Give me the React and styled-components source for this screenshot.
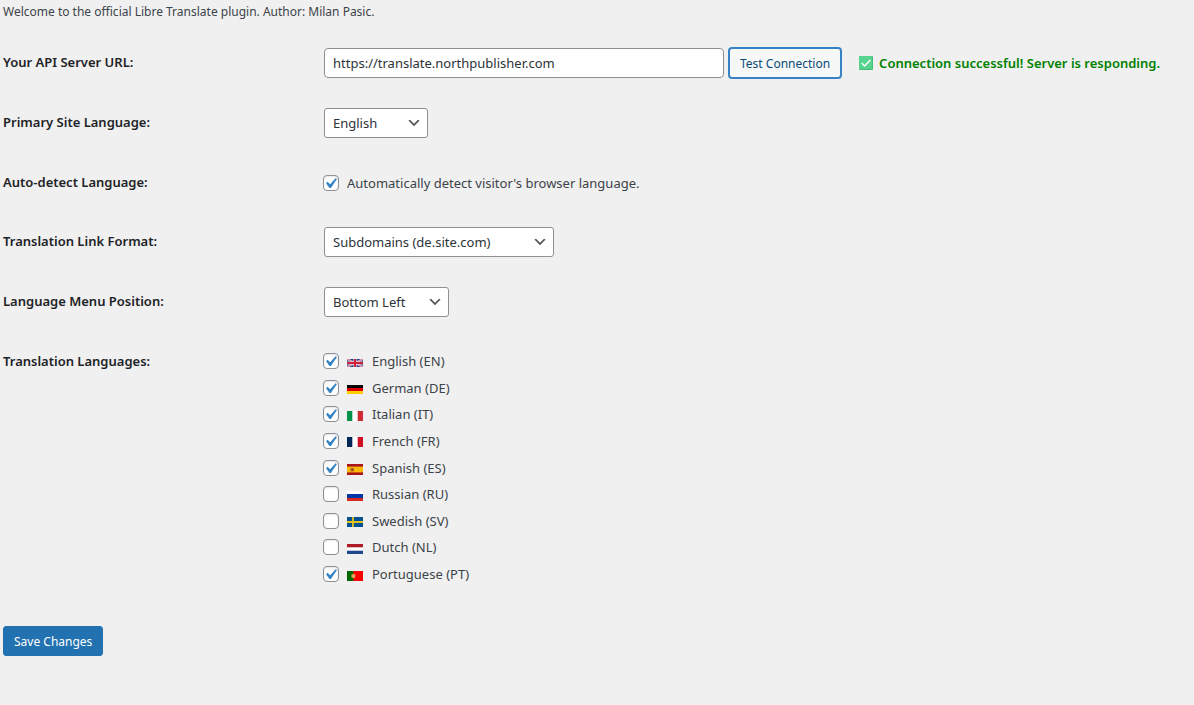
import { useState } from "react";
import styled, { createGlobalStyle } from "styled-components";

const LANGUAGES = [
  { code: "en", name: "English", active: true },
  { code: "de", name: "German", active: true },
  { code: "it", name: "Italian", active: true },
  { code: "fr", name: "French", active: true },
  { code: "es", name: "Spanish", active: true },
  { code: "ru", name: "Russian", active: false },
  { code: "sv", name: "Swedish", active: false },
  { code: "nl", name: "Dutch", active: false },
  { code: "pt", name: "Portuguese", active: true },
];

function App() {
  const [url, setUrl] = useState("https://translate.northpublisher.com");
  const [autoDetect, setAutoDetect] = useState(true);
  const [active, setActive] = useState(
    LANGUAGES.filter((l) => l.active).map((l) => l.code)
  );

  const toggle = (code) =>
    setActive((prev) =>
      prev.includes(code) ? prev.filter((c) => c !== code) : [...prev, code]
    );

  return (
    <>
      <GlobalStyle />
      <Page onSubmit={(e) => e.preventDefault()}>
        <Intro>
          Welcome to the official Libre Translate plugin. Author: Milan Pasic.
        </Intro>

        <Row>
          <RowLabel htmlFor="api-url">Your API Server URL:</RowLabel>
          <Controls>
            <TextInput
              id="api-url"
              type="text"
              value={url}
              onChange={(e) => setUrl(e.target.value)}
            />
            <TestButton type="button">Test Connection</TestButton>
            <Status role="status">
              <SuccessIcon />
              Connection successful! Server is responding.
            </Status>
          </Controls>
        </Row>

        <Row>
          <RowLabel htmlFor="site-lang">Primary Site Language:</RowLabel>
          <Controls>
            <SelectField id="site-lang" $width={104} options={["English", "German", "Italian"]} />
          </Controls>
        </Row>

        <Row $compact>
          <RowLabel htmlFor="auto-detect">Auto-detect Language:</RowLabel>
          <CheckLabel>
            <Checkbox
              id="auto-detect"
              type="checkbox"
              checked={autoDetect}
              onChange={() => setAutoDetect(!autoDetect)}
            />
            Automatically detect visitor's browser language.
          </CheckLabel>
        </Row>

        <Row>
          <RowLabel htmlFor="link-format">Translation Link Format:</RowLabel>
          <Controls>
            <SelectField
              id="link-format"
              $width={230}
              options={["Subdomains (de.site.com)", "Folders (site.com/de)"]}
            />
          </Controls>
        </Row>

        <Row>
          <RowLabel htmlFor="menu-position">Language Menu Position:</RowLabel>
          <Controls>
            <SelectField
              id="menu-position"
              $width={125}
              options={["Bottom Left", "Bottom Right"]}
            />
          </Controls>
        </Row>

        <Row as="fieldset" aria-labelledby="languages-title">
          <RowLabel as="span" id="languages-title">
            Translation Languages:
          </RowLabel>
          <LanguageList>
            {LANGUAGES.map(({ code, name }) => (
              <li key={code}>
                <CheckLabel>
                  <Checkbox
                    type="checkbox"
                    checked={active.includes(code)}
                    onChange={() => toggle(code)}
                  />
                  <Flag code={code} />
                  {name} ({code.toUpperCase()})
                </CheckLabel>
              </li>
            ))}
          </LanguageList>
        </Row>

        <SaveButton type="submit">Save Changes</SaveButton>
      </Page>
    </>
  );
}

function SelectField({ id, options, $width }) {
  return (
    <SelectWrap $width={$width}>
      <Select id={id}>
        {options.map((o) => (
          <option key={o}>{o}</option>
        ))}
      </Select>
      <Chevron viewBox="0 0 20 20" aria-hidden="true">
        <path d="M5 6l5 5 5-5 2 1-7 7-7-7 2-1z" fill="#555" />
      </Chevron>
    </SelectWrap>
  );
}

function SuccessIcon() {
  return (
    <svg width="14" height="14" viewBox="0 0 14 14" aria-hidden="true">
      <rect width="14" height="14" rx="1" fill="#44bd7c" />
      <rect width="13" height="13" rx="1" fill="#57d390" />
      <path
        d="M2.7 7.1l2.9 2.9 5.8-6"
        fill="none"
        stroke="#fff"
        strokeWidth="1.4"
      />
    </svg>
  );
}

const FLAGS = {
  en: (
    <>
      <rect width="16" height="8" fill="#283a80" />
      <path d="M0 0l16 8M16 0L0 8" stroke="#e4e4ee" strokeWidth="1.8" />
      <path d="M0 0l16 8M16 0L0 8" stroke="#d0405c" strokeWidth="0.7" />
      <path d="M8 0v8M0 4h16" stroke="#e8dce4" strokeWidth="3.2" />
      <path d="M8 0v8M0 4h16" stroke="#d0203c" strokeWidth="2" />
    </>
  ),
  de: (
    <>
      <rect width="16" height="3" fill="#000" />
      <rect y="3" width="16" height="3" fill="#dd0000" />
      <rect y="6" width="16" height="3" fill="#ffce00" />
    </>
  ),
  it: (
    <>
      <rect width="16" height="10" fill="#fff" />
      <rect width="5.3" height="10" fill="#009246" />
      <rect x="10.7" width="5.3" height="10" fill="#ce2b37" />
    </>
  ),
  fr: (
    <>
      <rect width="16" height="10" fill="#fff" />
      <rect width="5.3" height="10" fill="#002654" />
      <rect x="10.7" width="5.3" height="10" fill="#ce1126" />
    </>
  ),
  es: (
    <>
      <rect width="16" height="11" fill="#aa151b" />
      <rect y="2.6" width="16" height="5.8" fill="#f8b808" />
      <rect x="3.5" y="4" width="3.5" height="3.4" fill="#c06a20" />
      <rect x="4.5" y="4.6" width="1.6" height="2" fill="#96402a" />
    </>
  ),
  ru: (
    <>
      <rect width="16" height="10" fill="#fff" />
      <rect y="3" width="16" height="4" fill="#0039a6" />
      <rect y="7" width="16" height="3" fill="#d52b1e" />
    </>
  ),
  sv: (
    <>
      <rect width="16" height="10" fill="#005293" />
      <path d="M6 0v10M0 5h16" stroke="#e2c21c" strokeWidth="1.8" />
    </>
  ),
  nl: (
    <>
      <rect width="16" height="10" fill="#fff" />
      <rect width="16" height="3.3" fill="#ae1c28" />
      <rect y="6.7" width="16" height="3.3" fill="#21468b" />
    </>
  ),
  pt: (
    <>
      <rect width="16" height="10" fill="#ff0000" />
      <rect width="6.4" height="10" fill="#006600" />
      <circle cx="6.4" cy="5" r="2.2" fill="#d8b030" />
      <circle cx="6.4" cy="5" r="1.4" fill="#f06040" />
      <circle cx="6.4" cy="5" r="0.7" fill="#fff" />
    </>
  ),
};

const FLAG_HEIGHTS = { en: 8, de: 9, es: 11 };

function Flag({ code }) {
  const height = FLAG_HEIGHTS[code] || 10;
  return (
    <FlagBox aria-hidden="true">
      <svg width="16" height={height} viewBox={`0 0 16 ${height}`}>
        {FLAGS[code]}
      </svg>
    </FlagBox>
  );
}

const GlobalStyle = createGlobalStyle`
  * {
    box-sizing: border-box;
  }
  body {
    margin: 0;
    background: #f0f0f0;
    color: #3c434a;
    font-family: "Noto Sans", "Open Sans", sans-serif;
    font-size: 13px;
    line-height: 20px;
  }
  button, input, select {
    font: inherit;
  }
`;

const Page = styled.form`
  padding: 2px 3px 49px;
`;

const Intro = styled.p`
  margin: 0 0 11px;
  font-size: 12px;
`;

const Row = styled.div`
  display: grid;
  grid-template-columns: 320px 1fr;
  align-items: start;
  min-height: ${({ $compact }) => ($compact ? 59 : 60)}px;
  margin: 0;
  padding: 0;
  border: 0;
`;

const RowLabel = styled.label`
  padding-top: 19px;
  color: #1d2327;
  font-weight: 600;
`;

const Controls = styled.div`
  display: flex;
  align-items: center;
  padding: 15px 0 15px 1px;
`;

const TextInput = styled.input`
  width: 400px;
  height: 30px;
  padding: 0 8px;
  border: 1px solid #8c8f94;
  border-radius: 4px;
  background: #fff;
  color: #2c3338;
`;

const Button = styled.button`
  height: 30px;
  padding: 2px 10px 0;
  border: 1px solid;
  border-radius: 3px;
  font-size: 12px;
  white-space: nowrap;
`;

const TestButton = styled(Button)`
  margin: 0 18px 0 5px;
  border-color: #3582c4;
  background: #f6f7f7;
  box-shadow: 0 0 0 1px #3582c4;
  color: #0a4b78;
`;

const Status = styled.span`
  display: flex;
  align-items: center;
  gap: 6px;
  color: #008000;
  font-weight: 600;
  white-space: nowrap;
`;

const SelectWrap = styled.div`
  position: relative;
  width: ${({ $width }) => $width}px;
`;

const Select = styled.select`
  display: block;
  width: 100%;
  height: 30px;
  padding: 0 24px 0 8px;
  border: 1px solid #8c8f94;
  border-radius: 3px;
  background: #fff;
  color: #2c3338;
  appearance: none;
`;

const Chevron = styled.svg`
  position: absolute;
  top: 7px;
  right: 6px;
  width: 16px;
  height: 16px;
  pointer-events: none;
`;

const CheckLabel = styled.label`
  display: flex;
  align-items: center;
  height: 20px;

  ${Row} > & {
    margin-top: 20px;
  }
`;

const Checkbox = styled.input`
  flex: none;
  width: 16px;
  height: 16px;
  margin: 0 8px 0 0;
  border: 1px solid #8c8f94;
  border-radius: 4px;
  background: #fff;
  box-shadow: inset 0 1px 2px rgba(0, 0, 0, 0.1);
  appearance: none;

  &:checked {
    background: #fff
      url("data:image/svg+xml,%3Csvg xmlns='http://www.w3.org/2000/svg' viewBox='0 0 20 20'%3E%3Cpath d='M14.83 4.89l1.34.94-5.81 8.38H9.02L5.78 9.67l1.34-1.25 2.57 2.4z' fill='%233582c4'/%3E%3C/svg%3E")
      -4px -3px / 21px 21px no-repeat;
  }
`;

const LanguageList = styled.ul`
  display: grid;
  align-content: space-between;
  height: 233px;
  margin: 19px 0 0;
  padding: 0;
  list-style: none;
`;

const FlagBox = styled.span`
  display: flex;
  align-items: center;
  height: 12px;
  margin: 3px 9px 0 0;
`;

const SaveButton = styled(Button)`
  margin-top: 42px;
  border-color: #2271b1;
  background: #2271b1;
  color: #fff;
`;

export default App;
